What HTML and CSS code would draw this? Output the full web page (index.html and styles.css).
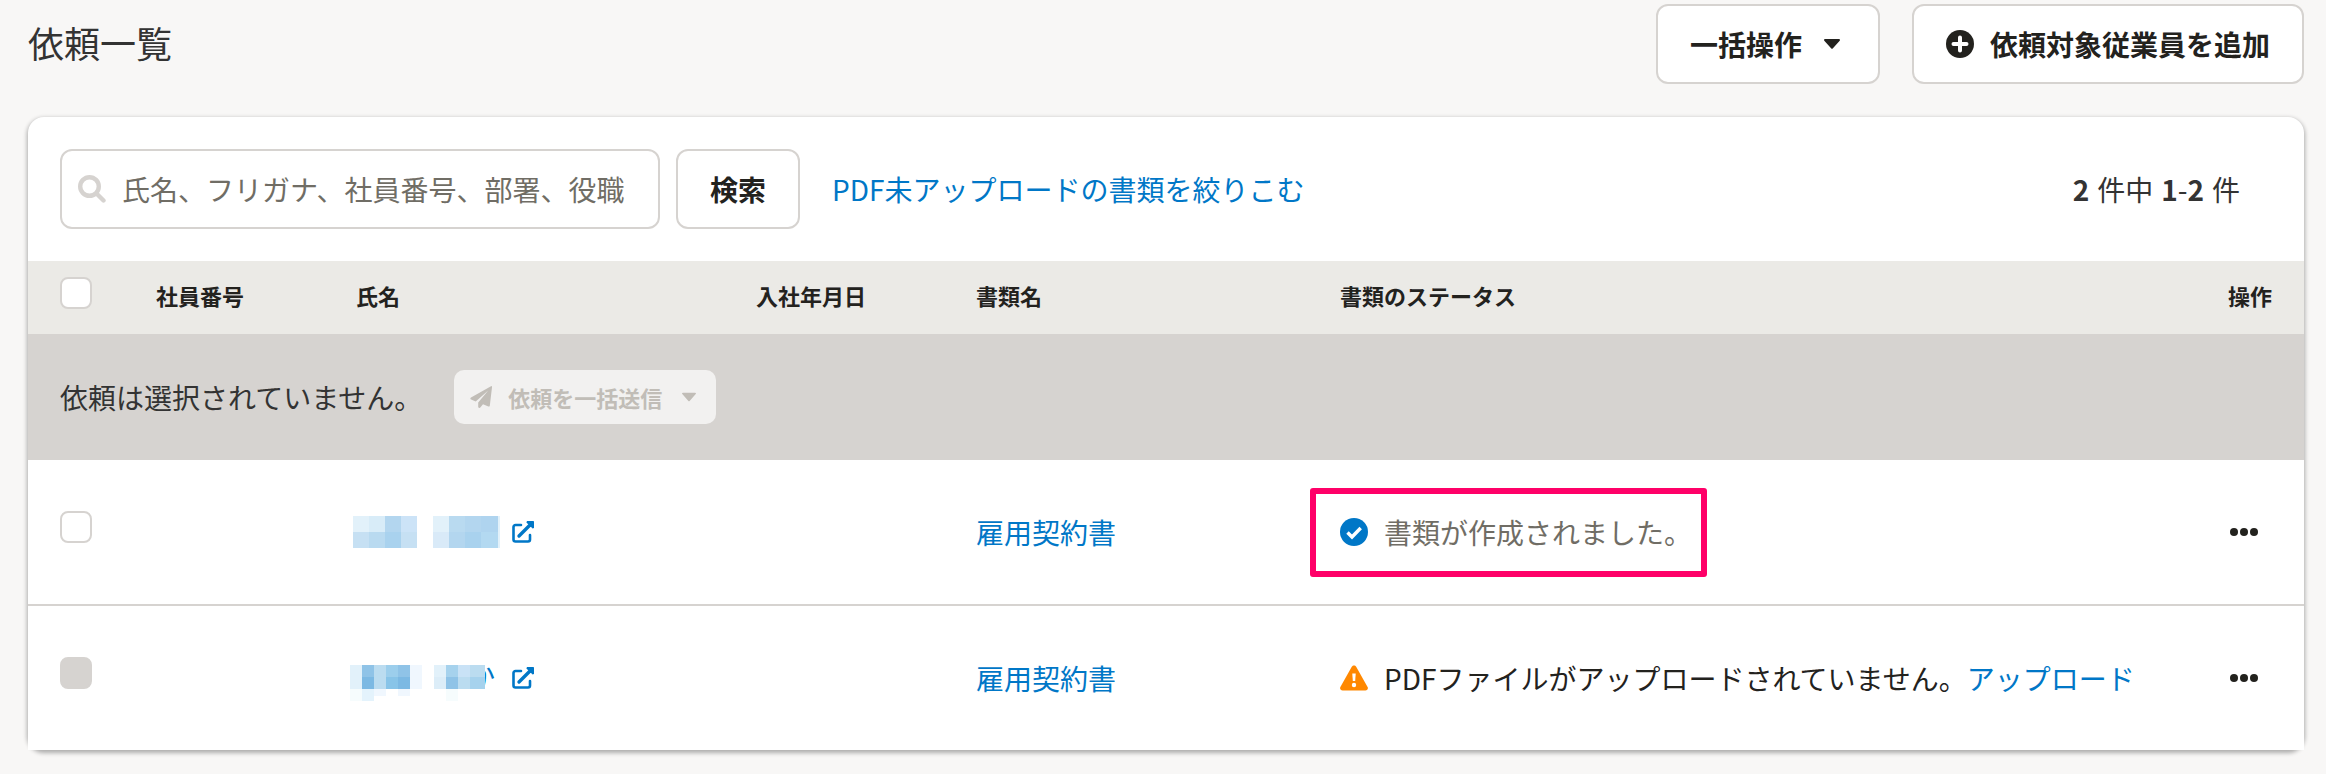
FILE: index.html
```html
<!doctype html>
<html lang="ja">
<head>
	<meta charset="UTF-8">
	<title>依頼一覧</title>
	<link rel="stylesheet" href="styles.css">
</head>
<body>
	<svg class="defs" aria-hidden="true">
		<symbol id="icon-external" viewBox="0 0 22 22">
			<path d="M9 4H3.5A2 2 0 0 0 1.5 6v12.5a2 2 0 0 0 2 2H16a2 2 0 0 0 2-2V14" fill="none" stroke="currentColor" stroke-width="2.6" stroke-linecap="round"/>
			<path d="M7 15 18 4" fill="none" stroke="currentColor" stroke-width="3.4" stroke-linecap="round"/>
			<path d="M15 0h6.2a.8.8 0 0 1 .8.8V7l-1.400.6-6.200-6.200z" fill="currentColor"/>
		</symbol>
		<symbol id="icon-dots" viewBox="0 0 28 8">
			<circle cx="4" cy="4" r="4"/><circle cx="14" cy="4" r="4"/><circle cx="24" cy="4" r="4"/>
		</symbol>
		<symbol id="icon-caret" viewBox="0 0 16 10">
			<path d="M1 0h14a1 1 0 0 1 .7 1.700l-7 7.800a1 1 0 0 1-1.400 0l-7-7.800A1 1 0 0 1 1 0z"/>
		</symbol>
	</svg>

	<header class="header">
		<h1>依頼一覧</h1>
		<div class="header_actions">
			<button type="button" class="btn">一括操作<svg class="caret"><use href="#icon-caret"/></svg></button>
			<button type="button" class="btn">
				<svg class="icon_plus" viewBox="0 0 28 28"><circle cx="14" cy="14" r="14" fill="currentColor"/><path d="M14 7.500v13M7.500 14h13" stroke="#fff" stroke-width="4" stroke-linecap="round"/></svg>
				依頼対象従業員を追加
			</button>
		</div>
	</header>

	<main class="panel">
		<form class="toolbar">
			<div class="search">
				<svg class="icon_search" viewBox="0 0 28 28"><circle cx="11.500" cy="11.500" r="9.300" fill="none" stroke="currentColor" stroke-width="4.400"/><path d="M18.500 18.500l7 7" stroke="currentColor" stroke-width="4.400" stroke-linecap="round"/></svg>
				<input type="text" aria-label="検索キーワード" placeholder="氏名、フリガナ、社員番号、部署、役職">
			</div>
			<button type="button" class="btn">検索</button>
			<a href="#" class="filter">PDF未アップロードの書類を絞りこむ</a>
			<p class="count"><b>2</b><span>件中</span><span><b>1</b>-<b>2</b></span><span>件</span></p>
		</form>

		<table class="list">
			<colgroup>
				<col class="col_check">
				<col class="col_number">
				<col class="col_name">
				<col class="col_date">
				<col class="col_doc">
				<col>
				<col class="col_action">
			</colgroup>
			<thead>
				<tr>
					<th><input type="checkbox" aria-label="すべて選択"></th>
					<th>社員番号</th>
					<th>氏名</th>
					<th>入社年月日</th>
					<th>書類名</th>
					<th>書類のステータス</th>
					<th>操作</th>
				</tr>
			</thead>
			<tbody>
				<tr class="bulk">
					<td colspan="7">
						<div class="bulk_inner">
							<span>依頼は選択されていません。</span>
							<button type="button" class="btn_send" disabled>
								<svg class="icon_send" viewBox="0 0 22 22"><path d="M21 .2 1 11.500c-.900.5-.8 1.700.1 2.100l4.600 1.900L18.200 4.600 8.200 16.600v4.200c0 1.200 1.400 1.600 2.100.8l2.700-3.400 5.400 2.300c.6.3 1.300-.1 1.400-.8L22 1.200c.1-.9-.5-1.300-1-1z" fill="currentColor"/></svg>
								依頼を一括送信
								<svg class="caret"><use href="#icon-caret"/></svg>
							</button>
						</div>
					</td>
				</tr>
				<tr>
					<td><input type="checkbox" aria-label="選択"></td>
					<td></td>
					<td>
						<a href="#" class="name">
							<!-- モザイク処理した氏名 -->
							<svg class="mosaic" viewBox="0 0 156 36" shape-rendering="crispEdges">
								<path fill="#e2f1fa" d="M3 2h16v16H3zM83 2h16v16H83z"/>
								<path fill="#d8ecf8" d="M19 2h16v16H19z"/>
								<path fill="#b3d6ef" d="M35 2h16v16H35zM115 2h16v16h-16zM99 18h16v16H99z"/>
								<path fill="#cce3f7" d="M51 2h16v16H51z"/>
								<path fill="#c6e0f3" d="M3 18h16v16H3zM51 18h16v16H51z"/>
								<path fill="#b9daf0" d="M19 18h16v16H19zM99 2h16v16H99z"/>
								<path fill="#a9d2ee" d="M35 18h16v16H35zM115 18h16v16h-16z"/>
								<path fill="#afd4ef" d="M131 2h17v16h-17z"/>
								<path fill="#d9eaf8" d="M83 18h16v16H83z"/>
								<path fill="#b3d9f1" d="M131 18h17v16h-17z"/>
								<path fill="#e2f1fa" d="M148 2h2v32h-2z"/>
							</svg>
							<svg class="icon_external"><use href="#icon-external"/></svg>
						</a>
					</td>
					<td></td>
					<td><a href="#">雇用契約書</a></td>
					<td>
						<span class="status status_done">
							<svg class="icon_status" viewBox="0 0 28 28"><circle cx="14" cy="14" r="14" fill="#0077c7"/><path d="M7.500 14.500l4.500 4.500 8.700-9" fill="none" stroke="#fff" stroke-width="3.400"/></svg>
							書類が作成されました。
						</span>
					</td>
					<td><button type="button" class="btn_more" aria-label="操作メニュー"><svg><use href="#icon-dots"/></svg></button></td>
				</tr>
				<tr>
					<td><input type="checkbox" aria-label="選択" disabled></td>
					<td></td>
					<td>
						<a href="#" class="name">
							<svg class="mosaic" viewBox="0 0 156 36">
								<text x="117" y="27">か</text>
								<g shape-rendering="crispEdges">
									<path fill="#fff" d="M84 0h51v36H84z"/>
									<path fill="#e2f1fa" d="M0 5h12v24H0zM84 5h12v12H84z"/>
									<path fill="#8fc3e7" d="M12 5h12v12H12zM48 5h12v12H48zM96 17h12v12H96z"/>
									<path fill="#bbdcf0" d="M24 5h12v24H24zM120 5h15v12h-15zM108 17h12v12h-12z"/>
									<path fill="#9cceec" d="M36 5h12v12H36z"/>
									<path fill="#f0f7fe" d="M60 5h12v24H60zM24 29h12v7H24zM48 29h12v7H48z"/>
									<path fill="#7cb9e3" d="M12 17h12v12H12zM48 17h12v12H48z"/>
									<path fill="#88c4e8" d="M36 17h12v12H36z"/>
									<path fill="#a6d2ed" d="M96 5h12v12H96zM120 17h15v12h-15z"/>
									<path fill="#c9e2f6" d="M108 5h12v12h-12z"/>
									<path fill="#dcedf8" d="M84 17h12v12H84z"/>
									<path fill="#e4f3fc" d="M12 29h12v12H12z"/>
									<path fill="#f6fcfd" d="M0 29h12v12H0zM96 29h12v12H96z"/>
								</g>
							</svg>
							<svg class="icon_external"><use href="#icon-external"/></svg>
						</a>
					</td>
					<td></td>
					<td><a href="#">雇用契約書</a></td>
					<td>
						<span class="status">
							<svg class="icon_status" viewBox="0 0 28 28"><path d="M16.200 2.800l11.400 20.300c.900 1.700-.3 3.400-2.200 3.400H2.600c-1.900 0-3.100-1.700-2.200-3.400L11.800 2.800c1-1.700 3.400-1.700 4.400 0z" fill="#ff8800"/><path d="M12.300 9.500h3.400l-.5 7.500h-2.400z" fill="#fff"/><circle cx="14" cy="21" r="2.200" fill="#fff"/></svg>
							<span>PDFファイルがアップロードされていません。<a href="#">アップロード</a></span>
						</span>
					</td>
					<td><button type="button" class="btn_more" aria-label="操作メニュー"><svg><use href="#icon-dots"/></svg></button></td>
				</tr>
			</tbody>
		</table>
	</main>
</body>
</html>
```
FILE: styles.css
```css
*{
	box-sizing: border-box;
}
body{
	margin: 0;
	padding: 4px 22px 24px 28px;
	background-color: #f8f7f6;
	color: #23221e;
	font-family: "Noto Sans CJK JP", sans-serif;
	font-size: 28px;
	line-height: 42px;
}
h1, p{
	margin: 0;
}
a{
	color: #0077c7;
	text-decoration: none;
}
button, input{
	font-family: inherit;
	font-size: inherit;
	line-height: inherit;
	color: inherit;
}
svg{
	flex-shrink: 0;
}
.defs{
	display: none;
}
.header{
	display: flex;
	align-items: center;
	justify-content: space-between;
	margin-bottom: 33px;
}
.header h1{
	padding-bottom: 4px;
	font-size: 36px;
	font-weight: normal;
	color: #333;
}
.header_actions{
	display: flex;
	gap: 32px;
}
.btn{
	display: flex;
	align-items: center;
	height: 80px;
	padding: 0 32px;
	border: 2px solid #d6d3d0;
	border-radius: 12px;
	background-color: #fff;
	font-weight: bold;
	white-space: nowrap;
}
.caret{
	width: 16px;
	height: 10px;
	margin: 0 6px 0 22px;
	fill: currentColor;
}
.icon_plus{
	width: 28px;
	height: 28px;
	margin-right: 16px;
}

/* パネル */
.panel{
	border-radius: 16px;
	background-color: #fff;
	box-shadow: 0 2px 4px 1px rgba(3, 3, 2, 0.3);
}
.toolbar{
	display: flex;
	align-items: center;
	gap: 16px;
	padding: 32px 64px 32px 32px;
}
.search{
	display: flex;
	align-items: center;
	width: 600px;
	height: 80px;
	padding: 0 16px;
	border: 2px solid #d6d3d0;
	border-radius: 12px;
}
.search input{
	flex: 1;
	min-width: 0;
	margin-left: 16px;
	padding: 0;
	border: 0;
	outline: 0;
	background: none;
}
.search input::placeholder{
	color: #706d65;
	opacity: 1;
}
.icon_search{
	width: 28px;
	height: 28px;
	color: #d6d3d0;
}
.filter{
	margin-left: 16px;
}
.count{
	display: flex;
	gap: 8px;
	margin-left: auto;
	color: #333;
}

/* 一覧 */
.list{
	width: 100%;
	table-layout: fixed;
	border-collapse: separate;
	border-spacing: 0;
}
.col_check{
	width: 112px;
}
.col_number{
	width: 200px;
}
.col_name{
	width: 400px;
}
.col_date{
	width: 220px;
}
.col_doc{
	width: 364px;
}
.col_action{
	width: 92px;
}
.list th, .list td{
	height: 146px;
	padding: 0 16px;
	text-align: left;
	vertical-align: middle;
	white-space: nowrap;
	background-color: #fff;
	border-bottom: 2px solid #d6d3d0;
}
.list th:first-child, .list td:first-child{
	padding-left: 32px;
}
.list th{
	height: 73px;
	padding-bottom: 6px;
	border: 0;
	background-color: #ebeae6;
	font-size: 22px;
}
.list tr:last-child td{
	height: 144px;
	border: 0;
}
.list .bulk td{
	height: 126px;
	border: 0;
	background-color: #d6d3d0;
	color: #333;
}
.list input{
	display: block;
	appearance: none;
	width: 32px;
	height: 32px;
	margin: 0 0 10px;
	border: 2px solid #d6d3d0;
	border-radius: 8px;
	background-color: #fff;
}
.list th input{
	margin-bottom: 4px;
}
.list input:disabled{
	background-color: #d6d3d0;
}
.bulk_inner{
	display: flex;
	align-items: center;
	gap: 32px;
}
.btn_send{
	display: flex;
	align-items: center;
	height: 54px;
	padding: 0 16px;
	border: 0;
	border-radius: 10px;
	background-color: #f2f1f0;
	color: #c1bdb7;
	font-size: 22px;
	font-weight: bold;
}
.btn_send .caret{
	width: 14px;
	margin: 0 4px 0 20px;
}
.icon_send{
	width: 22px;
	height: 22px;
	margin-right: 16px;
}
.name{
	display: flex;
	align-items: center;
	margin-left: -6px;
}
.mosaic{
	width: 156px;
	height: 36px;
	margin-right: 6px;
	fill: currentColor;
	overflow: visible;
}
.icon_external{
	width: 22px;
	height: 22px;
}
.status{
	position: relative;
	display: flex;
	align-items: center;
	width: fit-content;
}
.icon_status{
	width: 28px;
	height: 28px;
	margin-right: 16px;
}
.status_done{
	color: #706d65;
}
/* 注目してほしい箇所の枠 */
.status_done::after{
	content: '';
	position: absolute;
	inset: -23px -15px -24px -30px;
	border: 6px solid #ff0068;
	border-radius: 3px;
}
.btn_more{
	display: block;
	padding: 17px 2px;
	border: 0;
	background: none;
}
.btn_more svg{
	display: block;
	width: 28px;
	height: 8px;
	fill: currentColor;
}
```
